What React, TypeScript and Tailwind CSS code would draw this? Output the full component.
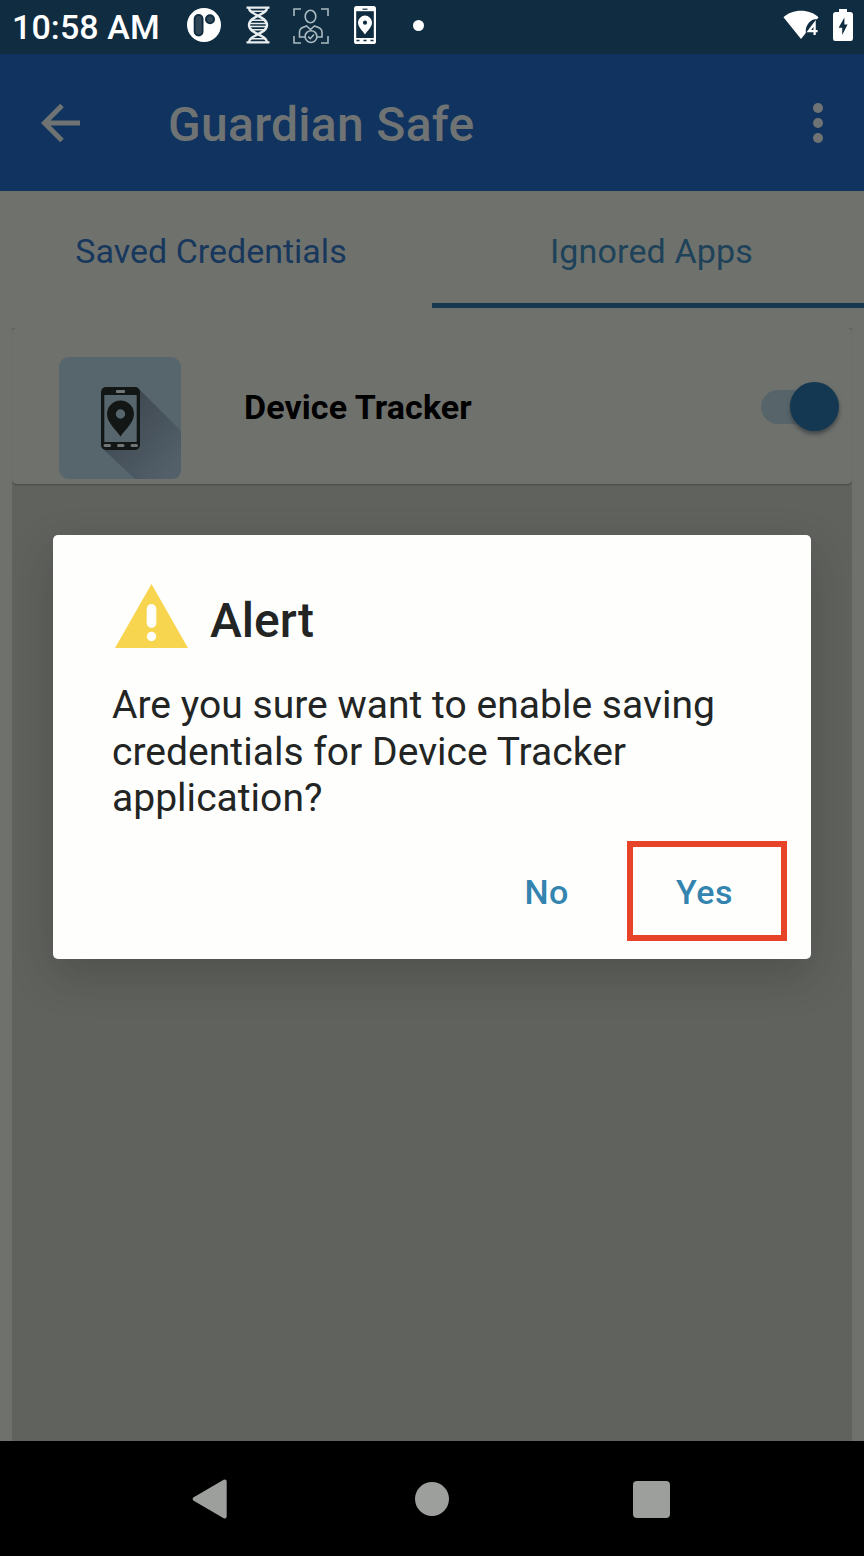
import type { ReactNode } from "react";

function DnaIcon() {
  return (
    <svg width="24" height="38" viewBox="0 0 24 38" fill="none" stroke="#e8eef0" strokeWidth="2">
      <path d="M0.5 1.6H23.5M0.5 36.4H23.5" strokeWidth="2.4" />
      <path d="M3 2C3 9 21 10 21 19C21 28 3 29 3 36M21 2C21 9 3 10 3 19C3 28 21 29 21 36" strokeWidth="2.4" />
      <path d="M5 5.3H19M5 32.7H19M6 14.2H18M4 17.4H20M4 20.6H20M6 23.8H18" strokeWidth="1.5" />
    </svg>
  );
}

function UserScanIcon() {
  return (
    <svg width="36" height="36" viewBox="0 0 36 36" fill="none" stroke="#a9bac1" strokeWidth="1.6">
      <path d="M1 8V1H8M28 1H35V8M35 28V35H28M8 35H1V28" />
      <ellipse cx="17.5" cy="8.5" rx="5.3" ry="6.2" />
      <path d="M12 29H6.5V24C6.5 20.5 9 19.5 13.5 18L17.5 21.5L21.5 18C26 19.5 29 20.5 29 24V29H24" />
      <circle cx="18" cy="28.6" r="5.9" />
      <path d="M15.2 28.6L17.3 30.7L21 26.5" />
    </svg>
  );
}

function PhonePinSmall() {
  return (
    <svg width="22" height="38" viewBox="0 0 22 38">
      <rect x="0" y="0" width="22" height="38" rx="2.6" fill="#fff" />
      <rect x="2.2" y="5.2" width="17.6" height="26.8" fill="#102c40" />
      <rect x="8.5" y="2.6" width="5" height="1.2" fill="#102c40" />
      <path fillRule="evenodd" d="M11 9.6A7 7 0 0 0 4 16.6C4 21.2 8.4 24.6 11 28.6C13.6 24.6 18 21.2 18 16.6A7 7 0 0 0 11 9.6ZM11 14.6A2.1 2.1 0 1 1 11 18.8A2.1 2.1 0 0 1 11 14.6Z" fill="#fff" />
      <path d="M2.5 34.5H5.5M9.5 34.5H12.5M16.5 34.5H19.5" stroke="#102c40" strokeWidth="1.5" />
    </svg>
  );
}

function StatusBar() {
  return (
    <header className="flex h-[54px] items-start bg-[#102c40] text-white">
      <span className="ml-3 mt-[9px] w-[176px] whitespace-nowrap text-[34px] font-medium leading-[36px] tracking-[0.1px]">
        10:58 AM
      </span>
      <svg className="-ml-px mt-2" width="34" height="34" viewBox="0 0 34 34">
        <circle cx="17" cy="17" r="17" fill="#fff" />
        <rect x="6.7" y="6" width="9.8" height="22.4" rx="4.9" fill="#102c40" />
        <rect x="8.6" y="8" width="6" height="18.4" rx="3" fill="#2f4656" />
        <circle cx="23" cy="11.2" r="5" fill="#102c40" />
        <circle cx="23" cy="11.2" r="3" fill="#2f4656" />
      </svg>
      <div className="ml-[25px] mt-1.5">
        <DnaIcon />
      </div>
      <div className="ml-[23px] mt-2">
        <UserScanIcon />
      </div>
      <div className="ml-[25px] mt-1.5">
        <PhonePinSmall />
      </div>
      <span className="ml-[37px] mt-5 size-[11px] rounded-full bg-white" />
      <div className="ml-auto flex">
        <svg className="mt-2.5" width="38" height="30" viewBox="0 0 38 30">
          <path d="M0.5 7.2C5 3 11 0.7 18 0.7S31 3 35.5 7.2L34 9.2H31.5C27.5 10 23.6 14.5 22.8 19.5V23L18 29Z" fill="#fff" />
          <path d="M31.6 25V13.4L25.8 21.2H34.6" fill="none" stroke="#fff" strokeWidth="2.3" />
        </svg>
        <svg className="ml-3 mr-[11px] mt-[9px]" width="20" height="32" viewBox="0 0 20 32">
          <path d="M6 0H14V3H17.7Q20 3 20 5.5V29.5Q20 32 17.7 32H2.3Q0 32 0 29.5V5.5Q0 3 2.3 3H6Z" fill="#fff" />
          <path d="M11.4 8.5L5.6 18.8H9.2V26L14.6 15.4H11.4Z" fill="#102c40" />
        </svg>
      </div>
    </header>
  );
}

function AppBar() {
  return (
    <div className="flex h-[137px] items-center bg-[#10345f] text-[#6f7374]">
      <svg className="ml-[41px]" width="40" height="40" viewBox="0 0 40 40" fill="none" stroke="currentColor" strokeWidth="5">
        <path d="M39 20H4M21 2.5L3.5 20L21 37.5" />
      </svg>
      <h1 className="ml-[87px] mt-[5px] whitespace-nowrap text-[48px] font-medium leading-[56px] tracking-[0.3px]">
        Guardian Safe
      </h1>
      <div className="ml-auto mr-[41px] flex flex-col gap-[5px]">
        <span className="size-2.5 rounded-full bg-current" />
        <span className="size-2.5 rounded-full bg-current" />
        <span className="size-2.5 rounded-full bg-current" />
      </div>
    </div>
  );
}

function Tab({ active, children }: { active?: boolean; children: ReactNode }) {
  return (
    <button
      className={
        active
          ? "h-[117px] w-1/2 border-b-[5px] border-[#17384f] pl-[7px] text-[34px] leading-[40px] tracking-[0.15px] text-[#1d4259]"
          : "h-[117px] w-1/2 border-b-[5px] border-transparent pr-[10px] text-[34px] leading-[40px] text-[#17375c]"
      }
    >
      <span className="mt-2 block whitespace-nowrap">{children}</span>
    </button>
  );
}

function DeviceTrackerIcon() {
  return (
    <svg width="122" height="122" viewBox="0 0 122 122">
      <defs>
        <linearGradient id="long-shadow" x1="0.2" y1="0.2" x2="0.9" y2="0.9">
          <stop offset="0" stopColor="#3e4850" />
          <stop offset="1" stopColor="#53606a" />
        </linearGradient>
      </defs>
      <rect width="122" height="122" rx="10" fill="#57656d" />
      <path d="M80 32L122 74V112Q122 122 112 122H76L44 92Z" fill="url(#long-shadow)" />
      <rect x="42" y="30" width="39" height="63" rx="5" fill="#121715" />
      <rect x="45.3" y="38" width="32.4" height="47" fill="#57656d" />
      <rect x="57" y="33" width="9" height="3" rx="0.8" fill="#6f7778" />
      <path fillRule="evenodd" d="M61.5 43.5A13.5 13.5 0 0 0 48 57C48 66 57.5 73 61.5 79.5C65.5 73 75 66 75 57A13.5 13.5 0 0 0 61.5 43.5ZM61.5 52.3A4.7 4.7 0 1 1 61.5 61.7A4.7 4.7 0 0 1 61.5 52.3Z" fill="#121715" />
      <path d="M46 88.5H50.5M59.5 88.5H64M73 88.5H77.5" stroke="#6f7778" strokeWidth="3" strokeLinecap="round" />
    </svg>
  );
}

function AppRow() {
  return (
    <div className="flex h-[156px] rounded-[5px] bg-[#6f716d] shadow-[0_2px_2px_-1px_#484a47]">
      <div className="ml-[47px] mt-[29px]">
        <DeviceTrackerIcon />
      </div>
      <span className="ml-[63px] mt-[59px] whitespace-nowrap text-[34px] font-bold leading-[40px] tracking-[0.1px] text-black">
        Device Tracker
      </span>
      <div className="ml-auto mr-[13px] mt-[54px] flex h-[49px] w-[78px] items-center">
        <span className="h-[34px] w-[50px] rounded-l-full bg-[#57656b]" />
        <span className="-ml-[21px] size-[49px] shrink-0 rounded-full bg-[#143851] shadow-[0_3px_4px_#3f4649]" />
      </div>
    </div>
  );
}

function AlertDialog() {
  return (
    <div className="absolute left-[53px] top-[535px] flex h-[424px] w-[758px] flex-col rounded-[5px] bg-[#fefefd] text-[#222524] shadow-[0_16px_44px_rgba(20,24,20,0.22)]">
      <div className="ml-[62px] mt-[49px] flex h-[72px] items-start">
        <svg width="73" height="65" viewBox="0 0 73 65">
          <path d="M36.5 0L73 64H0Z" fill="#f8d54e" />
          <rect x="31.7" y="20" width="9.6" height="24" rx="4.8" fill="#fefefd" />
          <circle cx="36.5" cy="52.5" r="4.7" fill="#fefefd" />
        </svg>
        <h2 className="ml-[22px] mt-[9px] whitespace-nowrap text-[48px] font-medium leading-[56px]">Alert</h2>
      </div>
      <p className="ml-[59px] mt-[26px] whitespace-nowrap text-[39px] leading-[46.5px] tracking-[0.03px]">
        Are you sure want to enable saving
        <br />
        credentials for Device Tracker
        <br />
        application?
      </p>
      <div className="ml-auto mr-6 mt-[19px] flex h-[100px] text-[34px] font-medium tracking-[0.6px] text-[#3484b0]">
        <button className="mr-[58px] pt-[3px]">No</button>
        <button className="w-40 border-[6px] border-[#e64329] pr-[5px] pt-[3px]">Yes</button>
      </div>
    </div>
  );
}

function NavigationBar() {
  return (
    <nav className="flex h-[115px] items-center bg-black pt-px text-[#9d9f9c]">
      <svg className="ml-48" width="35" height="40" viewBox="0 0 35 40">
        <path d="M32.7 2.5L2.7 20L32.7 37.5V2.5Z" fill="currentColor" stroke="currentColor" strokeWidth="4" strokeLinejoin="round" />
      </svg>
      <span className="ml-[188px] size-[34px] rounded-full bg-current" />
      <span className="ml-[184px] size-[37px] rounded-[4px] bg-current" />
    </nav>
  );
}

export default function App() {
  return (
    <div className="relative flex h-[1556px] w-[864px] flex-col overflow-hidden bg-[#6f716d] font-[Roboto,sans-serif]">
      <StatusBar />
      <AppBar />
      <div className="flex">
        <Tab>Saved Credentials</Tab>
        <Tab active>Ignored Apps</Tab>
      </div>
      <main className="mx-3 mt-5 flex-1 bg-[#60625e]">
        <AppRow />
      </main>
      <NavigationBar />
      <AlertDialog />
    </div>
  );
}
